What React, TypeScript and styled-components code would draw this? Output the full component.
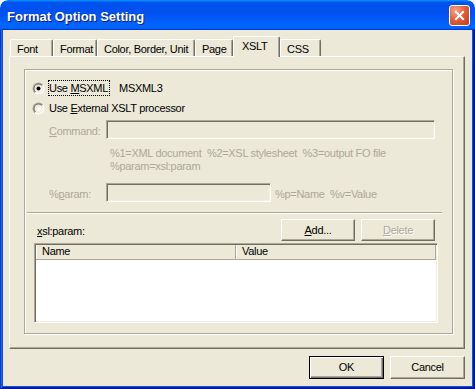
import React from "react";
import styled, { createGlobalStyle } from "styled-components";

const FONT = `"Liberation Sans", Arial, sans-serif`;

const Global = createGlobalStyle`
  html, body { margin: 0; padding: 0; background: #ffffff; }
  body { font-family: ${FONT}; font-size: 11px; }
  * { box-sizing: border-box; }
`;

const Window = styled.div`
  width: 475px;
  height: 389px;
  display: flex;
  flex-direction: column;
  border-radius: 8px 8px 0 0;
  overflow: hidden;
  font-family: ${FONT};
  font-size: 11px;
  letter-spacing: -0.3px;
  color: #000;
`;

const TitleBar = styled.div`
  height: 30px;
  flex: none;
  display: flex;
  align-items: center;
  padding: 3px 5px 0 7px;
  background: linear-gradient(
    180deg,
    #0997ff,
    #0053ee 8%,
    #0050ee 40%,
    #0066ff 88%,
    #0066ff 93%,
    #005bff 95%,
    #003dd7 96%,
    #003dd7
  );
  border-radius: 8px 8px 0 0;
`;

const Title = styled.span`
  flex: 1;
  color: #fff;
  font-weight: bold;
  font-size: 13px;
  line-height: 16px;
  letter-spacing: 0;
  text-shadow: 1px 1px #0a1883;
`;

const CloseButton = styled.div`
  width: 21px;
  height: 21px;
  margin-top: -2px;
  border: 1px solid #fff;
  border-radius: 3px;
  background: radial-gradient(circle at 30% 25%, #f4a58d 0%, #e2603f 45%, #c33b17 100%);
  display: flex;
  align-items: center;
  justify-content: center;
`;

const Frame = styled.div`
  flex: 1;
  display: flex;
  padding: 0 3px 3px 3px;
  background: #0855dd;
  box-shadow: inset 1px 0 #0831d9, inset -1px 0 #00138c, inset 0 -1px #00138c,
    inset 2px 0 #166aee, inset -2px 0 #001ea0, inset 0 -2px #001ea0;
`;

const Client = styled.div`
  flex: 1;
  display: flex;
  flex-direction: column;
  background: #ece9d8;
  padding: 6px 7px 7px 6px;
`;

const TabStrip = styled.div`
  height: 20px;
  flex: none;
  display: flex;
  align-items: flex-end;
  padding-left: 1px;
  position: relative;
  z-index: 1;
`;

const Tab = styled.div<{ $w: number; $active?: boolean }>`
  width: ${(p) => p.$w}px;
  height: ${(p) => (p.$active ? 21 : 17)}px;
  margin-bottom: ${(p) => (p.$active ? -1 : 0)}px;
  padding: 3px 0 0 ${(p) => (p.$active ? 8 : 6)}px;
  line-height: 13px;
  white-space: nowrap;
  background: #ece9d8;
  border-top: 1px solid #fff;
  border-left: 1px solid #fff;
  border-right: 1px solid #716f64;
  box-shadow: inset -1px 0 #aca899;
  border-radius: 2px 2px 0 0;
`;

const Panel = styled.div`
  flex: 1;
  display: flex;
  padding: 12px 11px 14px 14px;
  border-top: 1px solid #fff;
  border-left: 1px solid #fff;
  border-right: 1px solid #716f64;
  border-bottom: 1px solid #716f64;
  box-shadow: inset -1px -1px #aca899;
`;

const Group = styled.div`
  flex: 1;
  display: flex;
  flex-direction: column;
  border: 1px solid #aca899;
  box-shadow: inset 1px 1px #fff, 1px 1px #fff;
  padding: 10px 14px 0 7px;
`;

const RadioRow = styled.div<{ $gap?: number }>`
  display: flex;
  align-items: center;
  height: 16px;
  margin-top: ${(p) => p.$gap ?? 0}px;
`;

const RadioLabel = styled.span<{ $focused?: boolean }>`
  margin-left: 3px;
  line-height: 14px;
  padding-right: 1px;
  border: 1px ${(p) => (p.$focused ? "dotted #000" : "solid transparent")};
  white-space: nowrap;
`;

const Value = styled.span`
  margin-left: 9px;
  line-height: 14px;
`;

const FieldRow = styled.div<{ $gap: number }>`
  display: flex;
  align-items: flex-start;
  margin-top: ${(p) => p.$gap}px;
  margin-right: 3px;
  padding-left: 17px;
`;

const FieldLabel = styled.span<{ $disabled?: boolean }>`
  width: 57px;
  flex: none;
  padding-top: 5px;
  line-height: 13px;
  color: ${(p) => (p.$disabled ? "#aca899" : "#000")};
  white-space: nowrap;
`;

const TextField = styled.div<{ $w?: number }>`
  height: 19px;
  ${(p) => (p.$w ? `width: ${p.$w}px; flex: none;` : "flex: 1;")}
  background: #ece9d8;
  border-top: 1px solid #aca899;
  border-left: 1px solid #aca899;
  border-bottom: 1px solid #fff;
  border-right: 1px solid #fff;
  box-shadow: inset 1px 1px #716f64, inset -1px -1px #f1efe2;
`;

const Hint = styled.div<{ $gap: number; $indent: number }>`
  margin-top: ${(p) => p.$gap}px;
  padding-left: ${(p) => p.$indent}px;
  padding-top: ${(p) => (p.$indent < 10 ? 5 : 0)}px;
  line-height: 13px;
  color: #aca899;
  white-space: pre;
`;

const Separator = styled.div`
  height: 2px;
  margin: 10px -4px 0 -5px;
  border-top: 1px solid #aca899;
  border-bottom: 1px solid #fff;
`;

const ActionRow = styled.div`
  display: flex;
  align-items: flex-start;
  gap: 6px;
  margin-top: 5px;
  margin-right: 3px;
`;

const ListLabel = styled.span`
  flex: 1;
  margin-left: 5px;
  padding-top: 6px;
  line-height: 13px;
`;

const Button = styled.button<{ $w: number; $h: number; $default?: boolean }>`
  width: ${(p) => p.$w}px;
  height: ${(p) => p.$h}px;
  padding: 0;
  font: inherit;
  letter-spacing: inherit;
  line-height: 13px;
  color: #000;
  background: #ece9d8;
  border: 1px solid;
  border-color: ${(p) => (p.$default ? "#000" : "#fff #716f64 #716f64 #fff")};
  box-shadow: ${(p) =>
    p.$default
      ? "inset 1px 1px #fff, inset -1px -1px #716f64, inset -2px -2px #aca899"
      : "inset -1px -1px #aca899"};
  &:disabled {
    color: #aca899;
    text-shadow: 1px 1px #fff;
  }
`;

const ListView = styled.div`
  height: 80px;
  margin: 2px 0 0 2px;
  padding: 1px;
  background: #fff;
  border-top: 1px solid #aca899;
  border-left: 1px solid #aca899;
  border-bottom: 1px solid #fff;
  border-right: 1px solid #fff;
  box-shadow: inset 1px 1px #716f64, inset -1px -1px #f1efe2;
`;

const ListHeader = styled.div`
  display: flex;
  height: 15px;
`;

const HeaderCell = styled.div<{ $w: number }>`
  width: ${(p) => p.$w}px;
  height: 15px;
  padding-left: 6px;
  line-height: 13px;
  background: #ece9d8;
  border-right: 1px solid #aca899;
  border-bottom: 1px solid #aca899;
  box-shadow: inset 1px 0 #fff;
`;

const ButtonRow = styled.div`
  flex: none;
  display: flex;
  justify-content: flex-end;
  gap: 6px;
  margin-top: 7px;
`;

const RadioIcon: React.FC<{ checked?: boolean }> = ({ checked }) => (
  <svg width="13" height="13" viewBox="0 0 13 13" style={{ flex: "none" }}>
    <defs>
      <linearGradient id="radioOuter" x1="0" y1="0" x2="1" y2="1">
        <stop offset="0.5" stopColor="#aca899" />
        <stop offset="0.5" stopColor="#ffffff" />
      </linearGradient>
      <linearGradient id="radioInner" x1="0" y1="0" x2="1" y2="1">
        <stop offset="0.5" stopColor="#716f64" />
        <stop offset="0.5" stopColor="#f1efe2" />
      </linearGradient>
      <radialGradient id="radioFill" cx="0.6" cy="0.6" r="0.6">
        <stop offset="0" stopColor="#ffffff" />
        <stop offset="1" stopColor="#e6e3d6" />
      </radialGradient>
    </defs>
    <circle cx="6.5" cy="6.5" r="6" fill="url(#radioOuter)" />
    <circle cx="6.5" cy="6.5" r="5" fill="url(#radioInner)" />
    <circle cx="6.5" cy="6.5" r="4" fill="url(#radioFill)" />
    {checked && <circle cx="6.5" cy="6.5" r="2" fill="#000" />}
  </svg>
);

const CloseGlyph = () => (
  <svg width="11" height="11" viewBox="0 0 11 11">
    <path d="M2 2 L9 9 M9 2 L2 9" stroke="#fff" strokeWidth="2" strokeLinecap="square" />
  </svg>
);

const tabs = [
  { label: "Font", w: 43 },
  { label: "Format", w: 44 },
  { label: "Color, Border, Unit", w: 98 },
  { label: "Page", w: 38 },
  { label: "XSLT", w: 47, active: true },
  { label: "CSS", w: 41 },
];

export default function App() {
  return (
    <>
      <Global />
      <Window>
        <TitleBar>
          <Title>Format Option Setting</Title>
          <CloseButton>
            <CloseGlyph />
          </CloseButton>
        </TitleBar>
        <Frame>
          <Client>
            <TabStrip>
              {tabs.map((t) => (
                <Tab key={t.label} $w={t.w} $active={t.active}>
                  {t.label}
                </Tab>
              ))}
            </TabStrip>
            <Panel>
              <Group>
                <RadioRow>
                  <RadioIcon checked />
                  <RadioLabel $focused>
                    Use <u>M</u>SXML
                  </RadioLabel>
                  <Value>MSXML3</Value>
                </RadioRow>
                <RadioRow $gap={4}>
                  <RadioIcon />
                  <RadioLabel>
                    Use <u>E</u>xternal XSLT processor
                  </RadioLabel>
                </RadioRow>
                <FieldRow $gap={4}>
                  <FieldLabel $disabled>
                    <u>C</u>ommand:
                  </FieldLabel>
                  <TextField />
                </FieldRow>
                <Hint $gap={8} $indent={78}>
                  {"%1=XML document  %2=XSL stylesheet  %3=output FO file\n%param=xsl:param"}
                </Hint>
                <FieldRow $gap={10}>
                  <FieldLabel $disabled>
                    %<u>p</u>aram:
                  </FieldLabel>
                  <TextField $w={165} />
                  <Hint $gap={0} $indent={4}>
                    {"%p=Name  %v=Value"}
                  </Hint>
                </FieldRow>
                <Separator />
                <ActionRow>
                  <ListLabel>
                    <u>x</u>sl:param:
                  </ListLabel>
                  <Button $w={74} $h={22}>
                    <u>A</u>dd...
                  </Button>
                  <Button $w={74} $h={22} disabled>
                    <u>D</u>elete
                  </Button>
                </ActionRow>
                <ListView>
                  <ListHeader>
                    <HeaderCell $w={200}>Name</HeaderCell>
                    <HeaderCell $w={200}>Value</HeaderCell>
                  </ListHeader>
                </ListView>
              </Group>
            </Panel>
            <ButtonRow>
              <Button $w={75} $h={23} $default>
                OK
              </Button>
              <Button $w={75} $h={23}>
                Cancel
              </Button>
            </ButtonRow>
          </Client>
        </Frame>
      </Window>
    </>
  );
}
